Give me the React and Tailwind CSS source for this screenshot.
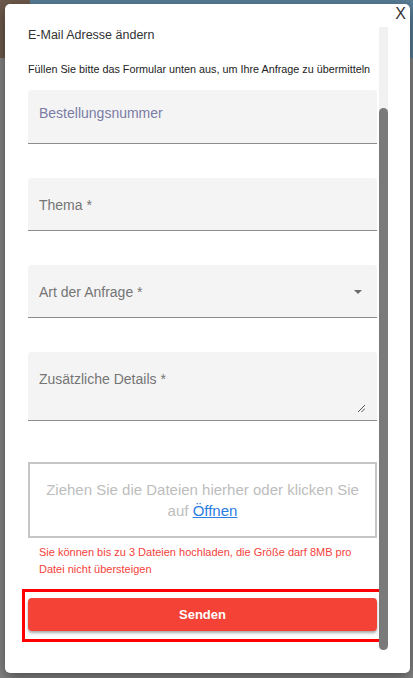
import { useState } from 'react';

const font = { fontFamily: '"Liberation Sans", Arial, sans-serif' };

function Field({ label, height = 'h-[53px]', labelTop = 'pt-[27px]', labelColor = 'text-[#757575]', children }) {
  return (
    <div className={`relative ${height} bg-[#f4f4f4] rounded-t-[4px] border-b border-[#8c8c8c] px-[11px] ${labelTop}`}>
      <div className={`text-[14px] leading-none -translate-y-1/2 ${labelColor}`}>{label}</div>
      {children}
    </div>
  );
}

export default function App() {
  const [files] = useState([]);

  return (
    <div className="relative h-[678px] w-[413px] overflow-hidden bg-[#808080]" style={font}>
      {/* dimmed page behind the dialog */}
      <div className="flex h-full flex-col">
        <div className="flex h-[58px]">
          <div className="w-[30px] bg-[#6e5a4c]" />
          <div className="flex-1 bg-[#5a7f98]" />
        </div>
        <div className="flex-1 bg-[#858585]" />
      </div>

      {/* dialog */}
      <div className="absolute left-[5px] top-[4px] flex h-[669px] w-[405px] flex-col rounded-[5px] bg-white shadow-[0_4px_14px_rgba(0,0,0,0.45)]">
        <button className="absolute right-[4px] top-[2px] text-[16px] font-light leading-none text-[#333]">X</button>

        <div className="mt-[23px] flex h-[623px] pl-[23px]">
          <div className="flex w-[349px] flex-col">
            <h2 className="text-[12.5px] leading-[16px] text-[#333]">E-Mail Adresse ändern</h2>
            <p className="mt-[19px] text-[10.8px] leading-[14px] text-[#222]">
              Füllen Sie bitte das Formular unten aus, um Ihre Anfrage zu übermitteln
            </p>

            <div className="mt-[14px] flex flex-col gap-[34px]">
              <Field label="Bestellungsnummer" height="h-[54px]" labelTop="pt-[23px]" labelColor="text-[#7a7ca6]" />
              <Field label="Thema *" />
              <Field label="Art der Anfrage *">
                <svg className="absolute right-[15px] top-[25px]" width="8" height="4" viewBox="0 0 8 4">
                  <path d="M0 0 L8 0 L4 4 Z" fill="#6b6b6b" />
                </svg>
              </Field>
              <Field label="Zusätzliche Details *" height="h-[69px]">
                <svg className="absolute right-[12px] bottom-[8px]" width="8" height="8" viewBox="0 0 8 8">
                  <path d="M1 8 L8 1 M4.5 8 L8 4.5" stroke="#555" strokeWidth="1" />
                </svg>
              </Field>
            </div>

            <div className="mt-[41px] flex h-[76px] flex-col items-center justify-center border-2 border-[#c6c6c6] text-center text-[15px] leading-[21px] text-[#bdbdbd]">
              <span>Ziehen Sie die Dateien hierher oder klicken Sie</span>
              <span>
                auf <a className="text-[#2a7de1] underline">Öffnen</a>
              </span>
            </div>

            <p className="mt-[6px] pl-[11px] pr-[20px] text-[11px] leading-[17px] text-[#f4423a]">
              Sie können bis zu 3 Dateien hochladen, die Größe darf 8MB pro Datei nicht übersteigen
            </p>

            <div className="-mx-[6px] mt-[11px] border-[3px] border-[#ff0000] px-[3px] pt-[6px] pb-[8px]">
              <button className="h-[33px] w-full rounded-[4px] bg-[#f44336] text-[13px] font-bold text-white shadow-[0_2px_3px_rgba(0,0,0,0.35)]">
                Senden
              </button>
            </div>
            {files.length > 0 && null}
          </div>

          {/* scrollbar */}
          <div className="ml-[2px] flex w-[9px] flex-col bg-[#f1f1f1]">
            <div className="mt-[81px] flex-1 rounded-[5px] bg-[#7a7a7a]" />
          </div>
        </div>
      </div>
    </div>
  );
}
